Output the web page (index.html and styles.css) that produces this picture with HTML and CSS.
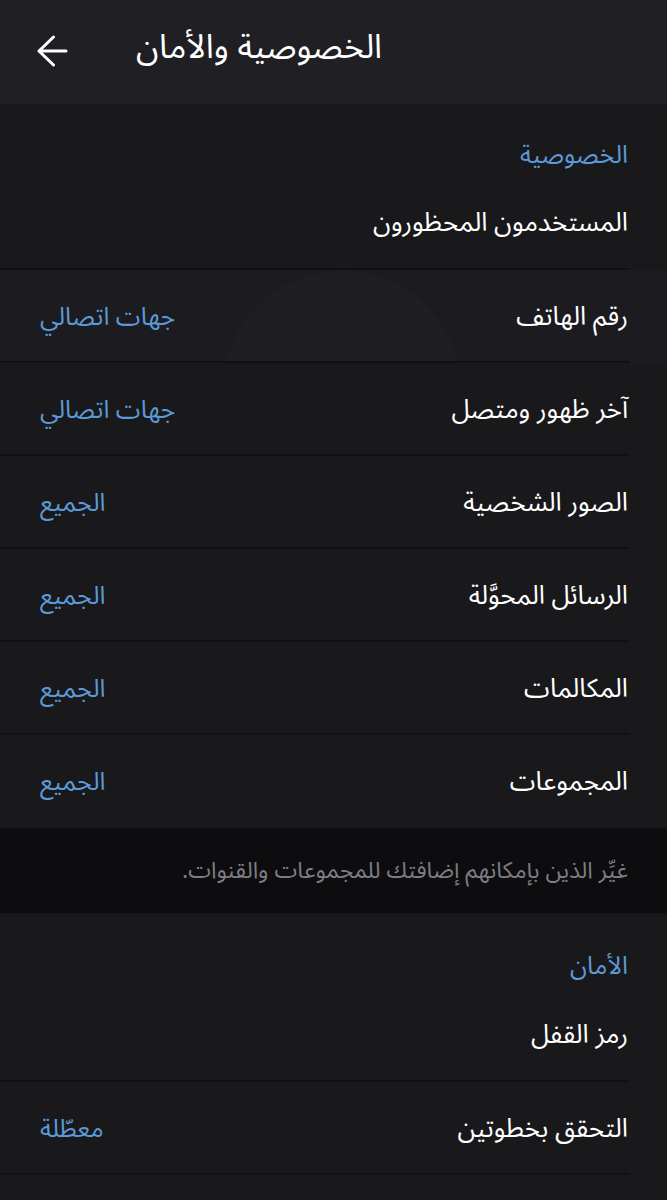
FILE: index.html
```html
<!DOCTYPE html>
<html lang="ar" dir="rtl">
<head>
<meta charset="utf-8">
<title>الخصوصية والأمان</title>
<link rel="stylesheet" href="styles.css">
</head>
<body>
<div class="app">
  <header class="topbar">
    <div class="back">
      <svg width="32" height="32" viewBox="0 0 32 32"><path d="M30 16H3M17.5 2L3 16l14.5 14" fill="none" stroke="#ffffff" stroke-width="3" stroke-linecap="round" stroke-linejoin="round"/></svg>
    </div>
    <div class="title">الخصوصية والأمان</div>
  </header>

  <section class="section">
    <div class="sec-title">الخصوصية</div>
    <div class="row row-first"><span class="label">المستخدمون المحظورون</span></div>
    <div class="row row-pressed"><span class="label">رقم الهاتف</span><span class="value">جهات اتصالي</span></div>
    <div class="row"><span class="label">آخر ظهور ومتصل</span><span class="value">جهات اتصالي</span></div>
    <div class="row"><span class="label">الصور الشخصية</span><span class="value">الجميع</span></div>
    <div class="row"><span class="label">الرسائل المحوَّلة</span><span class="value">الجميع</span></div>
    <div class="row"><span class="label">المكالمات</span><span class="value">الجميع</span></div>
    <div class="row row-last"><span class="label">المجموعات</span><span class="value">الجميع</span></div>
  </section>

  <div class="hint">غيِّر الذين بإمكانهم إضافتك للمجموعات والقنوات.</div>

  <section class="section section-security">
    <div class="sec-title">الأمان</div>
    <div class="row row-first"><span class="label">رمز القفل</span></div>
    <div class="row"><span class="label">التحقق بخطوتين</span><span class="value">معطّلة</span></div>
  </section>
</div>
</body>
</html>
```

FILE: styles.css
```css
* { box-sizing: border-box; }
html, body {
  margin: 0;
  padding: 0;
  background: #19181b;
}
body {
  font-family: "Noto Sans Arabic", "Noto Sans", "DejaVu Sans", sans-serif;
  color: #ffffff;
  width: 667px;
  height: 1200px;
  overflow: hidden;
}
.app { width: 667px; }

.topbar {
  height: 104px;
  background: #201f24;
  display: flex;
  direction: ltr;
  align-items: center;
  justify-content: flex-start;
  gap: 68px;
  padding: 0 0 0 36px;
}
.topbar .title {
  direction: rtl;
  font-size: 33.5px;
  color: #ffffff;
  line-height: 1;
  margin-top: -8px;
}
.back {
  width: 32px;
  height: 32px;
  display: flex;
  margin-top: -2px;
}

.section {
  background: #19181b;
}
.sec-title {
  padding: 31px 39px 0 39px;
  height: 72px;
  line-height: 40px;
  font-size: 25px;
  color: #5b9ad6;
}
.section-security .sec-title {
  height: 75px;
  padding-top: 33px;
}
.row {
  height: 93px;
  display: flex;
  align-items: center;
  justify-content: space-between;
  padding: 0 39px 0 40px;
  position: relative;
}
.row::after {
  content: "";
  position: absolute;
  left: 0;
  right: 37px;
  bottom: 0;
  height: 2px;
  background: #111013;
}
.row-first { height: 94px; padding-bottom: 0; }
.row-last::after { display: none; }
.row-pressed {
  background: radial-gradient(circle at 342px 120px, #1f1e22 0, #1f1e22 118px, #1c1b1f 120px);
}
.label {
  font-size: 26px;
  color: #ffffff;
  line-height: 40px;
}
.value {
  font-size: 25px;
  color: #5b9ad6;
  line-height: 40px;
}

.hint {
  background: #0d0c0e;
  height: 85px;
  padding: 0 39px;
  display: flex;
  align-items: center;
  font-size: 23px;
  color: #7e7d82;
}
```
